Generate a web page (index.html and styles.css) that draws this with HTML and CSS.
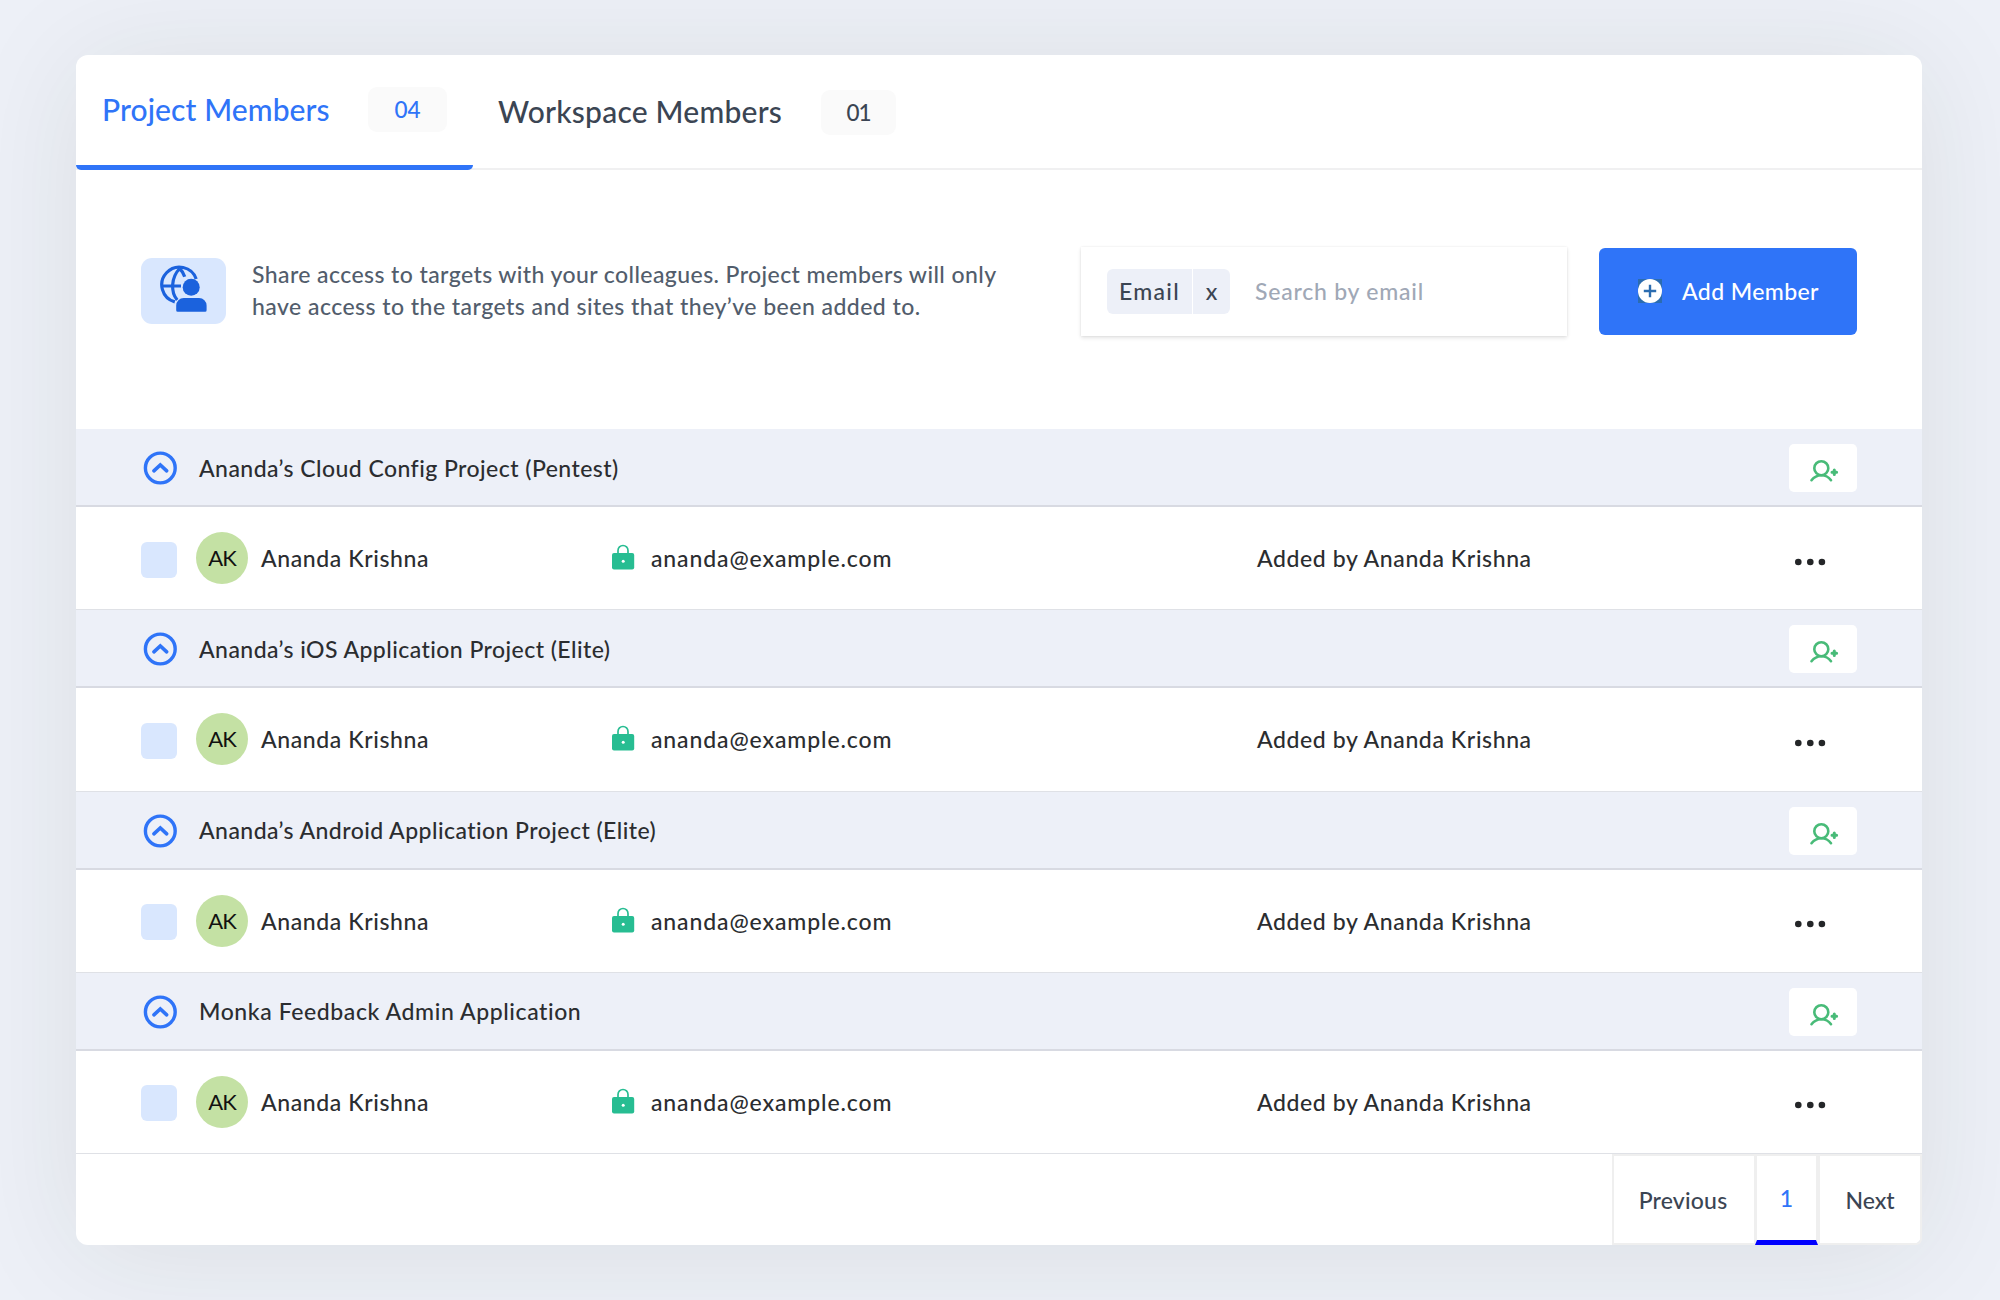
FILE: index.html
```
<!DOCTYPE html>
<html lang="en">
<head>
<meta charset="utf-8">
<title>Project Members</title>
<link rel="stylesheet" href="styles.css">
</head>
<body>
<svg width="0" height="0" class="sprite" aria-hidden="true">
  <symbol id="chevron" viewBox="0 0 34 34">
    <circle cx="17.300" cy="17" r="14.900" fill="none" stroke="#2f74f8" stroke-width="3.400"/>
    <path d="M10.900 19.900 17.300 14l6.400 5.900" fill="none" stroke="#2f74f8" stroke-width="3.600" stroke-linecap="round" stroke-linejoin="miter"/>
  </symbol>
  <symbol id="user-plus" viewBox="0 0 30 24">
    <g fill="none" stroke="#48bb78" stroke-width="2.600" stroke-linecap="round">
      <circle cx="12.300" cy="9.200" r="7"/>
      <path d="M2.500 21.200C5 18 8.300 16.200 12.300 16.200s7.500 1.800 9.700 5"/>
      <path d="M25.300 10.900v4.600M23 13.200h4.600" stroke-width="3"/>
    </g>
  </symbol>
  <symbol id="lock" viewBox="0 0 24 26">
    <path d="M7 10V6.500a5 5 0 0 1 10 0V10" fill="none" stroke="#27bd92" stroke-width="1.700"/>
    <rect x="1" y="9" width="22.200" height="16.600" rx="2" fill="#27bd92"/>
    <circle cx="12.200" cy="17.200" r="1.500" fill="#fff"/>
  </symbol>
  <symbol id="dots" viewBox="0 0 32 8">
    <g fill="#242628"><circle cx="4.300" cy="4" r="3.300"/><circle cx="16.300" cy="4" r="3.300"/><circle cx="27.900" cy="4" r="3.300"/></g>
  </symbol>
</svg>

<main class="card">
  <nav class="tabs">
    <a class="tab tab-active"><span class="tab-label">Project Members</span><span class="badge">04</span></a>
    <a class="tab tab-second"><span class="tab-label">Workspace Members</span><span class="badge">01</span></a>
  </nav>

  <section class="toolbar">
    <div class="share-icon">
      <svg width="50" height="50" viewBox="0 0 50 50">
        <g fill="none" stroke="#1b62dd" stroke-width="3.200">
          <path d="M38.200 14A17.700 17.700 0 1 0 16.800 36.900"/>
          <path d="M5 21h18M21.700 3.500C13 12.500 12.500 27 19.200 35M21.700 3.500c2.200 2.200 4 5 5 8.300"/>
        </g>
        <circle cx="33.200" cy="22.300" r="8.500" fill="#1b62dd"/>
        <path d="M18.200 45.200v-4.700a7.500 7.500 0 0 1 7.500-7.500h15.400a7.500 7.500 0 0 1 7.500 7.500v4.700a1.500 1.500 0 0 1-1.500 1.500H19.700a1.500 1.500 0 0 1-1.500-1.500z" fill="#1b62dd"/>
      </svg>
    </div>
    <p class="share-text"><span class="line-one">Share access to targets with your colleagues. Project members will only</span><br><span class="line-two">have access to the targets and sites that they’ve been added to.</span></p>
    <div class="search">
      <div class="chip"><span class="chip-label">Email</span><span class="chip-close">x</span></div>
      <span class="placeholder">Search by email</span>
    </div>
    <button class="add">
      <svg width="24" height="24" viewBox="0 0 24 24"><path d="M0 0h24v24H0z" fill="#2b6cb0"/><circle cx="12" cy="12" r="12" fill="#fff"/><path d="M12 5.800v12.400M5.800 12h12.400" stroke="#2b6cb0" stroke-width="2.400"/></svg>
      <span>Add Member</span>
    </button>
  </section>

  <section class="group">
    <header class="group-head"><svg class="chevron"><use href="#chevron"/></svg><h2>Ananda’s Cloud Config Project (Pentest)</h2><button class="invite"><svg width="30" height="24"><use href="#user-plus"/></svg></button></header>
    <div class="member"><i class="check"></i><b class="avatar">AK</b><span class="name">Ananda Krishna</span><svg class="lock"><use href="#lock"/></svg><span class="email">ananda@example.com</span><span class="added">Added by Ananda Krishna</span><svg class="dots"><use href="#dots"/></svg></div>
  </section>
  <section class="group">
    <header class="group-head"><svg class="chevron"><use href="#chevron"/></svg><h2>Ananda’s iOS Application Project (Elite)</h2><button class="invite"><svg width="30" height="24"><use href="#user-plus"/></svg></button></header>
    <div class="member"><i class="check"></i><b class="avatar">AK</b><span class="name">Ananda Krishna</span><svg class="lock"><use href="#lock"/></svg><span class="email">ananda@example.com</span><span class="added">Added by Ananda Krishna</span><svg class="dots"><use href="#dots"/></svg></div>
  </section>
  <section class="group">
    <header class="group-head"><svg class="chevron"><use href="#chevron"/></svg><h2>Ananda’s Android Application Project (Elite)</h2><button class="invite"><svg width="30" height="24"><use href="#user-plus"/></svg></button></header>
    <div class="member"><i class="check"></i><b class="avatar">AK</b><span class="name">Ananda Krishna</span><svg class="lock"><use href="#lock"/></svg><span class="email">ananda@example.com</span><span class="added">Added by Ananda Krishna</span><svg class="dots"><use href="#dots"/></svg></div>
  </section>
  <section class="group">
    <header class="group-head"><svg class="chevron"><use href="#chevron"/></svg><h2 class="wide">Monka Feedback Admin Application</h2><button class="invite"><svg width="30" height="24"><use href="#user-plus"/></svg></button></header>
    <div class="member"><i class="check"></i><b class="avatar">AK</b><span class="name">Ananda Krishna</span><svg class="lock"><use href="#lock"/></svg><span class="email">ananda@example.com</span><span class="added">Added by Ananda Krishna</span><svg class="dots"><use href="#dots"/></svg></div>
  </section>

  <footer class="pager">
    <a class="page page-prev">Previous</a><a class="page page-current">1</a><a class="page page-next">Next</a>
  </footer>
</main>
</body>
</html>
```
FILE: styles.css
```
* { box-sizing: border-box; }

body {
  margin: 0;
  height: 1300px;
  padding: 55px 78px 0 76px;
  overflow: hidden;
  background: #edf0f7;
  font: 500 23px/32px Lato, sans-serif;
  color: #2b2d30;
}

svg { display: block; flex: none; }
.sprite { position: absolute; }
button { border: 0; padding: 0; font: inherit; }

.card {
  height: 1190px;
  border-radius: 12px;
  background: #fff;
  box-shadow: 0 8px 120px rgba(40, 50, 20, .085);
}

/* Tabs */
.tabs { display: flex; height: 115px; border-bottom: 2px solid #f0f0f1; }
.tab { display: flex; align-items: flex-start; height: 115px; }
.tab-label { font-size: 30px; line-height: 40px; }
.badge {
  display: flex; align-items: center; justify-content: center;
  height: 45px; border-radius: 9px; background: #fafafa; font-size: 22.500px;
}
.tab-active {
  width: 397px; padding: 32px 0 0 26px; color: #2f74f8;
  border-bottom: 5px solid #2f74f8; border-radius: 0 0 5px 5px;
}
.tab-active .tab-label { width: 265.500px; padding-top: 2px; letter-spacing: .1px; }
.tab-active .badge { width: 79px; padding: 1px 0 0 1px; }
.tab-second { padding: 35px 0 0 25px; color: #3b4553; }
.tab-second .tab-label { width: 323px; padding-top: 1px; letter-spacing: .22px; }
.tab-second .badge { width: 75px; letter-spacing: -1px; }

/* Toolbar */
.toolbar { display: flex; align-items: center; height: 259px; padding: 0 65px 17px 65px; }
.share-icon { width: 85px; height: 66px; padding: 7px 0 0 17px; border-radius: 11px; background: #d9e7fe; }
.share-text { width: 827px; margin: -2px 0 0 26px; line-height: 32.500px; color: #525d6c; white-space: nowrap; }
.line-one { letter-spacing: .41px; }
.line-two { letter-spacing: .46px; }
.search {
  display: flex; align-items: center; width: 486px; height: 89px; margin-left: 2px; padding-left: 26px;
  background: #fff; box-shadow: 0 2px 4px rgba(0, 0, 0, .11), 0 0 2px rgba(0, 0, 0, .08);
}
.chip { display: flex; height: 45px; line-height: 45px; border-radius: 6px; overflow: hidden; background: #edf0f8; color: #3b4553; }
.chip-label { width: 86px; padding-left: 12px; letter-spacing: 1.300px; border-right: 1px solid #fff; }
.chip-close { width: 37px; text-align: center; }
.placeholder { margin-left: 25px; letter-spacing: .77px; color: #a0a8b6; }
.add {
  display: flex; align-items: center; width: 258px; height: 87px; margin-left: 32px; padding-left: 39px; gap: 20px;
  border-radius: 6px; background: #2f74f8; color: #fff; letter-spacing: .4px; white-space: nowrap;
}

/* Project groups */
.group { height: 181.250px; }
.group-head {
  display: flex; align-items: center; height: 78px; padding: 0 65px 0 67px;
  background: #edf0f8; border-bottom: 2px solid #d8dae2;
}
.chevron { width: 34px; height: 34px; margin-top: 2px; }
.group-head h2 { flex: 1; margin: 1px 0 0 22px; font: inherit; letter-spacing: .45px; }
.group-head .wide { letter-spacing: .59px; }
.invite { display: flex; width: 68px; height: 48px; margin-top: 2px; padding: 15px 0 0 20px; border-radius: 5px; background: #fff; }
.member { display: flex; align-items: center; height: 103.250px; padding: 0 96px 0 65px; border-bottom: 1px solid #dfe1e6; }
.check { width: 36px; height: 36px; margin-top: 3px; border-radius: 6px; background: #d9e7fe; }
.avatar {
  display: flex; align-items: center; justify-content: center; width: 52px; height: 52px; margin-left: 19px;
  border-radius: 50%; background: #c4e1a4; color: #111; font-size: 22px; font-weight: 400; letter-spacing: -1px;
}
.name { width: 350px; margin-left: 13px; letter-spacing: .6px; }
.lock { width: 24px; height: 26px; margin-top: -2px; }
.email { width: 606px; margin-left: 16px; letter-spacing: .88px; }
.added { flex: 1; letter-spacing: .6px; }
.dots { width: 32px; height: 8px; margin-top: 7px; }

/* Pagination */
.pager { display: flex; justify-content: flex-end; height: 91px; }
.page {
  display: flex; align-items: center; justify-content: center; height: 91px;
  border: 2px solid #efefef; border-top-width: 2px; color: #3b4553;
}
.page-prev { width: 143px; padding-right: 2px; border-right-width: 1px; letter-spacing: .2px; }
.page-current { width: 63px; border-bottom: 5px solid #0000fe; color: #2f74f8; }
.page-next { width: 104px; border-bottom-right-radius: 6px; }
```
